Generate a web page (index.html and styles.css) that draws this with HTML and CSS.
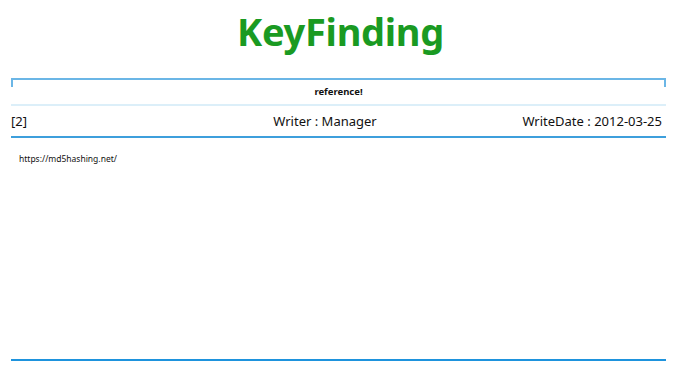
FILE: index.html
```html
<!DOCTYPE html>
<html lang="ko">
<head>
    <meta charset="UTF-8">
    <title>KeyFinding</title>
    <link rel="stylesheet" href="styles.css">
</head>
<body>
    <h1 class="site-title">KeyFinding</h1>

    <div class="board-view">
        <div class="view-subject">reference!</div>
        <div class="view-info">
            <span class="view-no">[2]</span>
            <span class="view-writer">Writer : Manager</span>
            <span class="view-date">WriteDate : 2012-03-25</span>
        </div>
        <div class="view-content">https://md5hashing.net/</div>
    </div>
</body>
</html>
```

FILE: styles.css
```css
body {
    margin: 0;
    font-family: "Noto Sans", "Open Sans", sans-serif;
    background: #fff;
    color: #111;
}

.site-title {
    margin: 0;
    padding-top: 6px;
    height: 78px;
    box-sizing: border-box;
    text-align: center;
    font-size: 38px;
    font-weight: bold;
    line-height: 50px;
    color: #1a9a22;
    letter-spacing: -0.3px;
}

.board-view {
    margin: 0 15px 0 11px;
}

.view-subject {
    position: relative;
    border-top: 2px solid #6bb6e6;
    height: 22px;
    padding-top: 2px;
    text-align: center;
    font-size: 9.5px;
    font-weight: bold;
    line-height: 20px;
    border-bottom: 2px solid #dceff9;
}

.view-subject::before,
.view-subject::after {
    content: "";
    position: absolute;
    top: 0;
    width: 2px;
    height: 7px;
    background: #6bb6e6;
}

.view-subject::before {
    left: 0;
}

.view-subject::after {
    right: 0;
}

.view-info {
    display: grid;
    grid-template-columns: 190px 1fr 217px;
    align-items: center;
    height: 30px;
    font-size: 13px;
    border-bottom: 2px solid #3d9fdc;
}

.view-writer {
    text-align: center;
}

.view-date {
    text-align: right;
    padding-right: 4px;
}

.view-content {
    height: 223px;
    padding: 15px 0 0 8px;
    box-sizing: border-box;
    font-size: 8.5px;
    border-bottom: 2px solid #1e93dd;
    box-shadow: 0 1px 0 #9fd0f0;
}
```
